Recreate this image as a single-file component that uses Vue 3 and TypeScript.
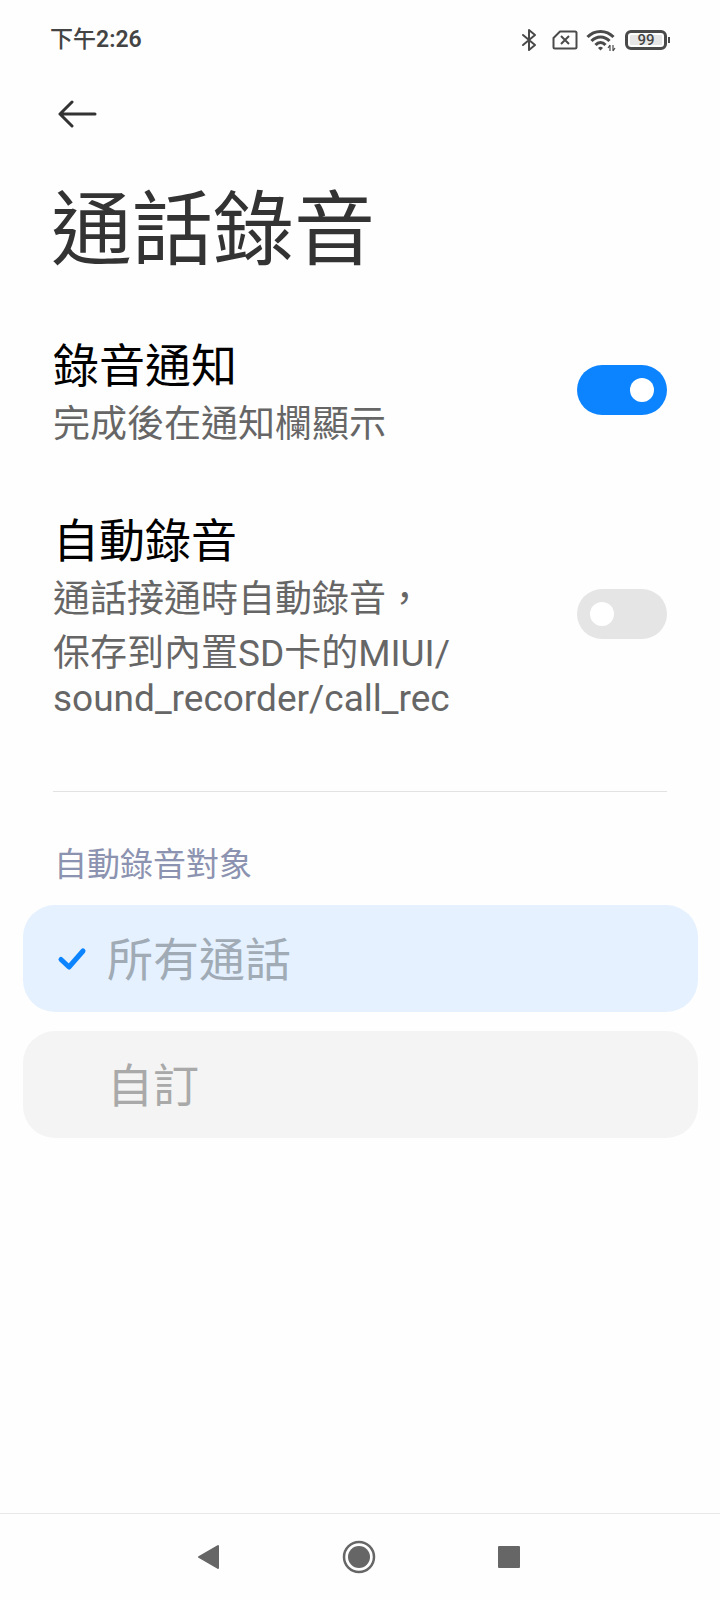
<script setup lang="ts">
import { ref } from 'vue'

interface Toggle {
  id: string
  title: string
  lines: string[]
  on: boolean
}

interface Choice {
  value: string
  label: string
}

const toggles = ref<Toggle[]>([
  { id: 'notify', title: '錄音通知', lines: ['完成後在通知欄顯示'], on: true },
  {
    id: 'auto',
    title: '自動錄音',
    lines: ['通話接通時自動錄音，', '保存到內置SD卡的MIUI/', 'sound_recorder/call_rec'],
    on: false,
  },
])

const choices: Choice[] = [
  { value: 'all', label: '所有通話' },
  { value: 'custom', label: '自訂' },
]
const target = ref('all')
</script>

<template>
  <div class="screen" lang="zh-Hant">
    <div class="status">
      <span class="time">下午<b>2:26</b></span>
      <div class="indicators">
        <svg class="bluetooth" width="16" height="24" viewBox="0 0 16 24" fill="none" stroke="#4a4a4a" stroke-width="2" stroke-linejoin="round" stroke-linecap="round" aria-label="藍牙">
          <path d="M2 7 L14 17 L8 22 V2 L14 7 L2 17" />
        </svg>
        <svg width="26" height="20" viewBox="0 0 26 20" fill="none" stroke="#4a4a4a" stroke-width="2" stroke-linejoin="round" aria-label="沒有 SIM 卡">
          <path d="M8 1.5 H23 a1.5 1.5 0 0 1 1.5 1.5 V17 a1.5 1.5 0 0 1 -1.5 1.5 H3 a1.5 1.5 0 0 1 -1.5 -1.5 V8 Z" />
          <path d="M9 6 L17 14 M17 6 L9 14" />
        </svg>
        <svg class="wifi" width="30" height="24" viewBox="0 0 30 24" fill="none" stroke="#4a4a4a" stroke-width="3" aria-label="Wi-Fi">
          <path d="M1.5 9 C8.5 1.5 20.500 1.5 27.500 9" />
          <path d="M5.500 13 C10.500 7.500 18.500 7.500 23.500 13" />
          <path d="M9.500 17 C12.500 13.500 16.500 13.500 19.500 17" />
          <path d="M12 20 Q14.500 17.500 17 20 L14.500 22.500 Z" fill="#4a4a4a" stroke="none" />
          <path d="M24 17 V23 M27 17 V23 M22 20 L24 17 M29 20 L27 23" stroke-width="1.200" />
        </svg>
        <span class="battery"><span class="level">99</span></span>
      </div>
    </div>

    <header class="header">
      <button class="back" type="button" aria-label="返回">
        <svg width="40" height="28" viewBox="0 0 40 28" fill="none" stroke="#333" stroke-width="3" stroke-linecap="round" stroke-linejoin="round">
          <path d="M38 14 H3 M15 2 L3 14 L15 26" />
        </svg>
      </button>
      <h1>通話錄音</h1>
    </header>

    <main>
      <section class="toggles">
        <div v-for="t in toggles" :key="t.id" class="row">
          <label class="text" :for="t.id">
            <span class="title">{{ t.title }}</span>
            <span v-for="line in t.lines" :key="line" class="summary">{{ line }}</span>
          </label>
          <input :id="t.id" v-model="t.on" class="switch" type="checkbox" role="switch" />
        </div>
      </section>

      <fieldset class="choices">
        <legend>自動錄音對象</legend>
        <label v-for="c in choices" :key="c.value" class="choice" :class="{ selected: target === c.value }">
          <input v-model="target" type="radio" name="target" :value="c.value" disabled />
          <svg class="tick" width="30" height="24" viewBox="0 0 30 24" fill="none" stroke="#0d84ff" stroke-width="5" stroke-linecap="round" stroke-linejoin="round" aria-hidden="true">
            <path d="M4 12.500 L12 20 L26 4" />
          </svg>
          <span class="name">{{ c.label }}</span>
        </label>
      </fieldset>
    </main>

    <nav class="nav" aria-label="系統導覽">
      <button type="button" aria-label="返回">
        <svg width="22" height="26" viewBox="0 0 22 26" fill="#666" stroke="#666" stroke-width="2" stroke-linejoin="round"><path d="M1 13 L20 2 V24 Z" /></svg>
      </button>
      <button type="button" aria-label="首頁">
        <svg width="34" height="34" viewBox="0 0 34 34"><circle cx="17" cy="17" r="15" fill="none" stroke="#666" stroke-width="2.500" /><circle cx="17" cy="17" r="11" fill="#666" /></svg>
      </button>
      <button type="button" aria-label="最近使用">
        <svg width="22" height="22" viewBox="0 0 22 22"><rect width="22" height="22" rx="1" fill="#666" /></svg>
      </button>
    </nav>
  </div>
</template>

<style>
body {
  margin: 0;
  background: #fefefe;
}
</style>

<style scoped>
.screen {
  display: flex;
  flex-direction: column;
  min-height: 100vh;
  box-sizing: border-box;
  background: #fefefe;
  color: #000;
  font-family: Roboto, "Noto Sans CJK TC", sans-serif;
}

.status {
  display: flex;
  align-items: center;
  justify-content: space-between;
  height: 80px;
  padding: 0 50px;
}

.time {
  color: #444;
  font-size: 23px;
  font-weight: 500;
  line-height: 32px;
}

.time b {
  font-weight: 600;
}

.indicators {
  display: flex;
  align-items: center;
  gap: 8px;
}

.bluetooth {
  margin-right: 7px;
}

.battery {
  display: flex;
  align-items: center;
  margin-left: 1px;
}

.level {
  display: block;
  box-sizing: border-box;
  width: 42px;
  height: 20px;
  border: 3px solid #4a4a4a;
  border-radius: 6px;
  background: #e6e6e6;
  box-shadow: inset 0 0 0 2px #fefefe;
  color: #444;
  font-size: 15px;
  font-weight: 500;
  line-height: 15px;
  text-align: center;
}

.battery::after {
  content: "";
  width: 2px;
  height: 6px;
  margin-left: 1px;
  background: #4a4a4a;
}

button {
  display: flex;
  align-items: center;
  justify-content: center;
  padding: 0;
  border: 0;
  background: none;
}

.header {
  padding: 20px 51px 0;
}

.back {
  width: 52px;
  height: 28px;
}

h1 {
  margin: 43px 0 0;
  color: #333;
  font-size: 81px;
  font-weight: 400;
  line-height: 120px;
}

.toggles {
  display: flex;
  flex-direction: column;
  gap: 55px;
  margin: 0 53px;
  padding: 39px 0 69px;
  border-bottom: 1px solid #e2e2e2;
}

.row {
  display: flex;
  align-items: center;
  justify-content: space-between;
}

.text {
  display: flex;
  flex-direction: column;
  padding: 8px 0 2px;
}

.title {
  font-size: 46px;
  line-height: 56px;
}

.summary {
  color: #666;
  font-size: 37px;
}

.switch {
  appearance: none;
  display: flex;
  align-items: center;
  flex: none;
  width: 90px;
  height: 50px;
  margin: 0;
  padding: 0 13px;
  border-radius: 25px;
  background: #e5e5e5;
}

.switch::before {
  content: "";
  width: 24px;
  height: 24px;
  border-radius: 50%;
  background: #fff;
}

.switch:checked {
  justify-content: flex-end;
  background: #0d84ff;
}

.choices {
  display: flex;
  flex-direction: column;
  gap: 19px;
  min-width: 0;
  margin: 49px 22px 0 23px;
  padding: 0;
  border: 0;
}

legend {
  margin-bottom: 16px;
  padding: 0 31px;
  color: #8c93b0;
  font-size: 33px;
  line-height: 48px;
}

.choice {
  display: flex;
  align-items: center;
  gap: 20px;
  height: 107px;
  padding: 0 34px;
  border-radius: 32px;
  background: #f4f4f4;
  color: #a9a9a9;
  font-size: 46px;
}

.choice.selected {
  background: #e5f1ff;
  color: #a0abb5;
}

.choice input {
  appearance: none;
  position: absolute;
  margin: 0;
}

.name {
  padding-bottom: 6px;
}

.tick {
  visibility: hidden;
}

.selected .tick {
  visibility: visible;
}

.nav {
  display: flex;
  justify-content: center;
  gap: 102px;
  margin-top: auto;
  padding-right: 2px;
  border-top: 1px solid #e8e8e8;
}

.nav button {
  width: 48px;
  height: 86px;
}
</style>
